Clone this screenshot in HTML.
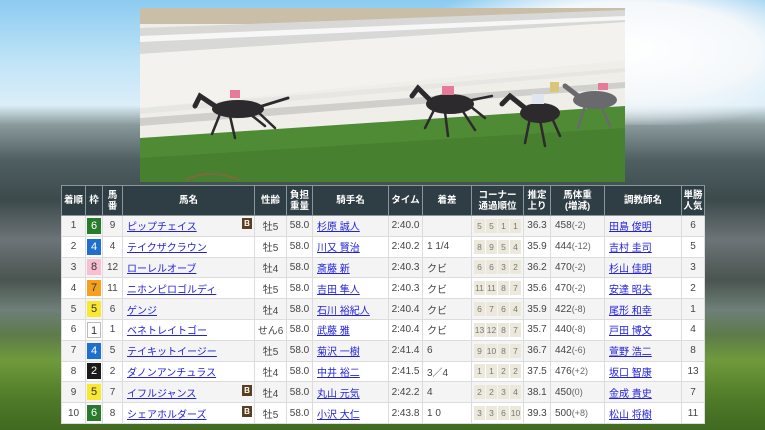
<!DOCTYPE html>
<html><head><meta charset="utf-8"><style>
*{margin:0;padding:0;box-sizing:border-box}
body{width:765px;height:430px;overflow:hidden;position:relative;font-family:"Liberation Sans","Noto Sans CJK JP",sans-serif;
background:linear-gradient(180deg,#8ccbf0 0px,#bfe3f7 60px,#dceef8 105px,#8a9a9c 125px,#4f5f62 160px,#3c4a4c 200px,#6c7478 240px,#4a5450 280px,#6f7f78 310px,#5d7b4a 335px,#6f9a3c 360px,#4f7a28 400px,#3f6a20 430px);}
.sky{position:absolute;left:420px;top:0;width:345px;height:125px;background:radial-gradient(ellipse at 60% 40%,#ffffff 0,#f4f8fb 45%,rgba(255,255,255,0) 75%)}
.video{position:absolute;left:140px;top:8px;width:485px;height:174px;overflow:hidden}
table{position:absolute;left:61px;top:185px;width:643px;border-collapse:collapse;table-layout:fixed;font-size:10px;color:#444}
th{background:#2f3e45;color:#fff;font-weight:bold;font-size:9.5px;line-height:11px;height:30px;border:1px solid #8a969a;text-align:center}
td{height:20.8px;border:1px solid #dcdcdc;text-align:center;white-space:nowrap;overflow:hidden;background:#fff}
tr:nth-child(even) td{background:#f4f4f4}
td.l{text-align:left;padding-left:4px}
a{color:#2222dd;text-decoration:underline}
.w{display:inline-block;width:14px;height:16px;line-height:16px;color:#fff;font-size:11px;text-align:center}
.b{float:right;margin-right:2px;width:10px;height:11px;background:#5a3e24;color:#fff;font-size:8px;line-height:11px;text-align:center;font-weight:bold}
.c span{display:inline-block;width:11px;height:14px;line-height:14px;background:#ece9dc;color:#777;font-size:8.5px;margin:0 0.5px}
.k{color:#666;font-size:9px}
</style></head><body>
<div class="sky"></div>
<div class="video"><svg width="485" height="174" viewBox="0 0 485 174">
<rect width="485" height="174" fill="#f0eee8"/>
<rect width="485" height="16" fill="#c9bfa8"/>
<polygon points="0,20 485,2 485,14 0,46" fill="#d8d8d6"/>
<polygon points="0,28 485,8 485,12 0,34" fill="#f7f7f7"/>
<polygon points="0,46 485,14 485,52 0,100" fill="#f3f2ee"/>
<polygon points="0,100 485,60 485,64 0,106" fill="#e6e6e2"/>
<polygon points="0,110 485,74 485,80 0,118" fill="#cfd0cb"/>
<polygon points="0,130 485,98 485,174 0,174" fill="#4f8a34"/>
<polygon points="0,150 485,120 485,174 0,174" fill="#47802e"/>
<g fill="#2c2a2c" stroke="#2c2a2c" stroke-linecap="round">
<ellipse cx="98" cy="101" rx="26" ry="9" stroke="none"/>
<path d="M75,98 L60,88 L55,98" stroke-width="5" fill="none"/>
<path d="M122,98 L148,90" stroke-width="3" fill="none"/>
<path d="M80,106 L72,126 M90,108 L95,130 M110,106 L125,118 M118,104 L135,120" stroke-width="2.5" fill="none"/>
<ellipse cx="310" cy="96" rx="24" ry="10" stroke="none"/>
<path d="M290,92 L278,80 L272,88" stroke-width="5" fill="none"/>
<path d="M295,100 L285,120 M305,104 L308,128 M322,102 L335,122 M330,98 L345,110 M332,92 L352,88" stroke-width="2.5" fill="none"/>
<ellipse cx="400" cy="105" rx="20" ry="10" stroke="none"/>
<path d="M385,100 L370,88 L362,96" stroke-width="5" fill="none"/>
<path d="M390,110 L385,135 M400,112 L405,138 M412,110 L420,128" stroke-width="2.5" fill="none"/>
</g>
<g fill="#6a6a6e" stroke="#6a6a6e" stroke-linecap="round">
<ellipse cx="455" cy="92" rx="22" ry="9" stroke="none"/>
<path d="M438,88 L425,78" stroke-width="5" fill="none"/>
<path d="M445,98 L438,120 M462,100 L470,118" stroke-width="2.5" fill="none"/>
</g>
<g fill="#e77a9a"><rect x="90" y="82" width="10" height="8"/><rect x="302" y="78" width="12" height="9"/><rect x="458" y="75" width="10" height="7"/></g>
<rect x="392" y="86" width="12" height="10" fill="#dfe6ef"/><rect x="410" y="74" width="9" height="10" fill="#d9c67a"/>
<path d="M45,172 Q70,160 100,172" stroke="#7a6a40" stroke-width="2" fill="none"/>
</svg></div>
<table>
<colgroup><col style="width:24px"><col style="width:17px"><col style="width:20px"><col style="width:132px"><col style="width:32px"><col style="width:26px"><col style="width:76px"><col style="width:34px"><col style="width:49px"><col style="width:52px"><col style="width:27px"><col style="width:54px"><col style="width:77px"><col style="width:23px"></colgroup>
<tr><th>着順</th><th>枠</th><th>馬<br>番</th><th>馬名</th><th>性齢</th><th>負担<br>重量</th><th>騎手名</th><th>タイム</th><th>着差</th><th>コーナー<br>通過順位</th><th>推定<br>上り</th><th>馬体重<br>(増減)</th><th>調教師名</th><th>単勝<br>人気</th></tr>
<tr><td>1</td><td><span class="w" style="background:#2a7a2e">6</span></td><td>9</td><td class="l"><a>ピップチェイス</a><span class="b">B</span></td><td>牡5</td><td>58.0</td><td class="l"><a>杉原 誠人</a></td><td>2:40.0</td><td class="l"></td><td class="c"><span>5</span><span>5</span><span>1</span><span>1</span></td><td>36.3</td><td class="l">458<span class="k">(-2)</span></td><td class="l"><a>田島 俊明</a></td><td>6</td></tr>
<tr><td>2</td><td><span class="w" style="background:#1f6fcf">4</span></td><td>4</td><td class="l"><a>テイクザクラウン</a></td><td>牡5</td><td>58.0</td><td class="l"><a>川又 賢治</a></td><td>2:40.2</td><td class="l">1 1/4</td><td class="c"><span>8</span><span>9</span><span>5</span><span>4</span></td><td>35.9</td><td class="l">444<span class="k">(-12)</span></td><td class="l"><a>吉村 圭司</a></td><td>5</td></tr>
<tr><td>3</td><td><span class="w" style="background:#f7bfd0;color:#333">8</span></td><td>12</td><td class="l"><a>ローレルオーブ</a></td><td>牡4</td><td>58.0</td><td class="l"><a>斎藤 新</a></td><td>2:40.3</td><td class="l">クビ</td><td class="c"><span>6</span><span>6</span><span>3</span><span>2</span></td><td>36.2</td><td class="l">470<span class="k">(-2)</span></td><td class="l"><a>杉山 佳明</a></td><td>3</td></tr>
<tr><td>4</td><td><span class="w" style="background:#f7a020;color:#333">7</span></td><td>11</td><td class="l"><a>ニホンピロゴルディ</a></td><td>牡5</td><td>58.0</td><td class="l"><a>吉田 隼人</a></td><td>2:40.3</td><td class="l">クビ</td><td class="c"><span>11</span><span>11</span><span>8</span><span>7</span></td><td>35.6</td><td class="l">470<span class="k">(-2)</span></td><td class="l"><a>安達 昭夫</a></td><td>2</td></tr>
<tr><td>5</td><td><span class="w" style="background:#f8e830;color:#333">5</span></td><td>6</td><td class="l"><a>ゲンジ</a></td><td>牡4</td><td>58.0</td><td class="l"><a>石川 裕紀人</a></td><td>2:40.4</td><td class="l">クビ</td><td class="c"><span>6</span><span>7</span><span>6</span><span>4</span></td><td>35.9</td><td class="l">422<span class="k">(-8)</span></td><td class="l"><a>尾形 和幸</a></td><td>1</td></tr>
<tr><td>6</td><td><span class="w" style="background:#fff;color:#333;border:1px solid #bbb">1</span></td><td>1</td><td class="l"><a>ベネトレイトゴー</a></td><td>せん6</td><td>58.0</td><td class="l"><a>武藤 雅</a></td><td>2:40.4</td><td class="l">クビ</td><td class="c"><span>13</span><span>12</span><span>8</span><span>7</span></td><td>35.7</td><td class="l">440<span class="k">(-8)</span></td><td class="l"><a>戸田 博文</a></td><td>4</td></tr>
<tr><td>7</td><td><span class="w" style="background:#1f6fcf">4</span></td><td>5</td><td class="l"><a>テイキットイージー</a></td><td>牡5</td><td>58.0</td><td class="l"><a>菊沢 一樹</a></td><td>2:41.4</td><td class="l">6</td><td class="c"><span>9</span><span>10</span><span>8</span><span>7</span></td><td>36.7</td><td class="l">442<span class="k">(-6)</span></td><td class="l"><a>萱野 浩二</a></td><td>8</td></tr>
<tr><td>8</td><td><span class="w" style="background:#1a1a1a">2</span></td><td>2</td><td class="l"><a>ダノンアンチュラス</a></td><td>牡4</td><td>58.0</td><td class="l"><a>中井 裕二</a></td><td>2:41.5</td><td class="l">3／4</td><td class="c"><span>1</span><span>1</span><span>2</span><span>2</span></td><td>37.5</td><td class="l">476<span class="k">(+2)</span></td><td class="l"><a>坂口 智康</a></td><td>13</td></tr>
<tr><td>9</td><td><span class="w" style="background:#f8e830;color:#333">5</span></td><td>7</td><td class="l"><a>イフルジャンス</a><span class="b">B</span></td><td>牡4</td><td>58.0</td><td class="l"><a>丸山 元気</a></td><td>2:42.2</td><td class="l">4</td><td class="c"><span>2</span><span>2</span><span>3</span><span>4</span></td><td>38.1</td><td class="l">450<span class="k">(0)</span></td><td class="l"><a>金成 貴史</a></td><td>7</td></tr>
<tr><td>10</td><td><span class="w" style="background:#2a7a2e">6</span></td><td>8</td><td class="l"><a>シェアホルダーズ</a><span class="b">B</span></td><td>牡5</td><td>58.0</td><td class="l"><a>小沢 大仁</a></td><td>2:43.8</td><td class="l">1 0</td><td class="c"><span>3</span><span>3</span><span>6</span><span>10</span></td><td>39.3</td><td class="l">500<span class="k">(+8)</span></td><td class="l"><a>松山 将樹</a></td><td>11</td></tr>
</table>
</body></html>
